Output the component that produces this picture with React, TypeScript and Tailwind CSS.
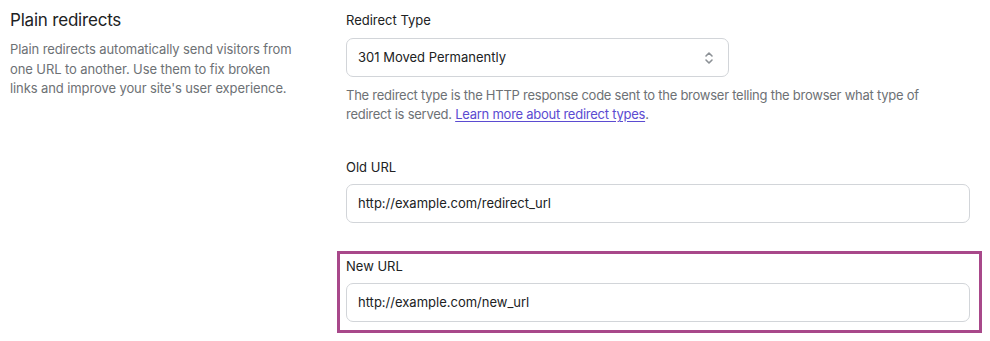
export default function App() {
  return (
    <div
      className="w-[990px] h-[341px] bg-white flex text-[#202223] overflow-hidden"
      style={{ fontFamily: 'Inter, "Noto Sans", sans-serif' }}
    >
      {/* Section intro */}
      <div className="w-[346px] shrink-0 pl-[10px] pt-[9px]">
        <h2 className="text-[17px] leading-[22px] tracking-[-0.2px]">Plain redirects</h2>
        <p className="mt-[9px] w-[286px] text-[13px] leading-[19.5px] text-[#6d7175] tracking-[-0.1px]">
          Plain redirects automatically send visitors from one URL to another. Use them to fix broken links and
          improve your site's user experience.
        </p>
      </div>

      {/* Form */}
      <div className="w-[624px] shrink-0 pt-[10px]">
        <label className="block text-[13px] leading-[20px]">Redirect Type</label>
        <div className="mt-[8px] h-[39px] w-[383px] rounded-[7px] border border-[#d2d5d9] flex items-center justify-between pl-[11px] pr-[14px]">
          <span className="text-[13px]">301 Moved Permanently</span>
          <svg width="10" height="14" viewBox="0 0 10 14" fill="none" stroke="#8c9196" strokeWidth="1.6" strokeLinecap="round" strokeLinejoin="round">
            <path d="M2 5 L5 2 L8 5" />
            <path d="M2 9 L5 12 L8 9" />
          </svg>
        </div>
        <p className="mt-[9px] w-[575px] text-[13px] leading-[19px] text-[#6d7175] tracking-[-0.25px]">
          The redirect type is the HTTP response code sent to the browser telling the browser what type of redirect
          is served.{' '}
          <a href="#" className="text-[#5b4bd1] underline underline-offset-2">
            Learn more about redirect types
          </a>
          .
        </p>

        <div className="mt-[33px]">
          <label className="block text-[13px] leading-[20px]">Old URL</label>
          <div className="mt-[7px] h-[39px] rounded-[7px] border border-[#d2d5d9] flex items-center px-[11px] text-[13px]">
            http://example.com/redirect_url
          </div>
        </div>

        <div className="mt-[28px] -ml-[9px] -mr-[12px] border-[3px] border-[#a8488a] pl-[6px] pr-[9px] pt-[2px] pb-[8px]">
          <label className="block text-[13px] leading-[20px]">New URL</label>
          <div className="mt-[7px] h-[39px] rounded-[7px] border border-[#d2d5d9] flex items-center px-[11px] text-[13px]">
            http://example.com/new_url
          </div>
        </div>
      </div>
    </div>
  );
}
